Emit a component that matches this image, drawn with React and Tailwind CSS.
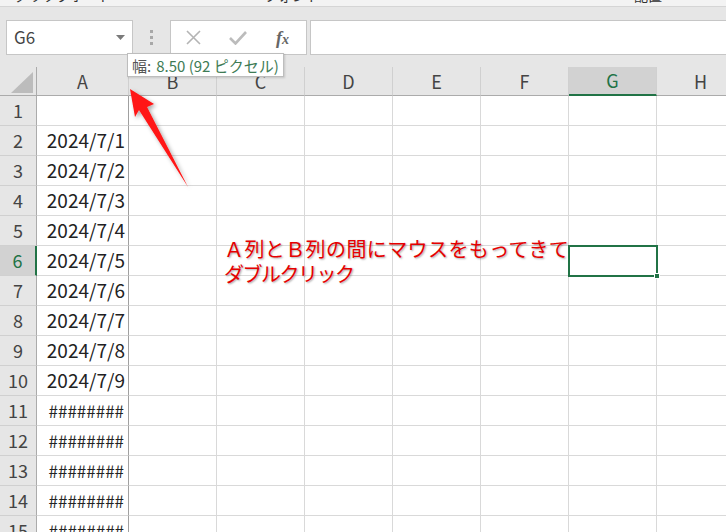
import React from "react";

const cols = ["A", "B", "C", "D", "E", "F", "G", "H"];
const aVals = [
  "",
  "2024/7/1",
  "2024/7/2",
  "2024/7/3",
  "2024/7/4",
  "2024/7/5",
  "2024/7/6",
  "2024/7/7",
  "2024/7/8",
  "2024/7/9",
  "########",
  "########",
  "########",
  "########",
  "########",
];

const font = { fontFamily: '"Noto Sans CJK JP", "Noto Sans", sans-serif' };

export default function App() {
  return (
    <div
      className="relative w-[726px] h-[532px] overflow-hidden bg-white text-[#222]"
      style={font}
    >
      {/* ribbon remnant */}
      <div className="h-[7px] bg-[#f3f3f3] border-b border-[#d5d5d5] overflow-hidden">
        <div className="flex -mt-[13px] text-[14px] leading-[16px] text-[#333]">
          <span className="ml-[14px] w-[240px]">クリップボード</span>
          <span className="ml-[10px] w-[360px]">フォント</span>
          <span className="ml-[10px]">配置</span>
        </div>
      </div>

      {/* formula bar area */}
      <div className="h-[60px] bg-[#e6e6e6] pt-[13px] flex items-start">
        <div className="ml-[6px] w-[127px] h-[35px] bg-white border border-[#c6c6c6] flex items-center justify-between pl-[7px] pr-[7px]">
          <span className="text-[17px] text-[#444] -mt-[2px]">G6</span>
          <svg width="9" height="5" viewBox="0 0 9 5">
            <path d="M0 0 L9 0 L4.5 5 Z" fill="#7a7a7a" />
          </svg>
        </div>
        <div className="w-[37px] h-[35px] flex flex-col items-center justify-center gap-[3px]">
          <span className="w-[3px] h-[3px] bg-[#a8a8a8]" />
          <span className="w-[3px] h-[3px] bg-[#a8a8a8]" />
          <span className="w-[3px] h-[3px] bg-[#a8a8a8]" />
        </div>
        <div className="w-[137px] h-[35px] bg-white border border-[#c6c6c6] flex items-center">
          <svg className="ml-[15px]" width="15" height="15" viewBox="0 0 15 15">
            <path d="M1 1 L14 14 M14 1 L1 14" stroke="#b4b4b4" strokeWidth="1.6" />
          </svg>
          <svg className="ml-[28px]" width="18" height="15" viewBox="0 0 18 15">
            <path d="M1 8 L6.5 13.5 L17 2" stroke="#bcbcbc" strokeWidth="2.6" fill="none" />
          </svg>
          <span
            className="ml-[29px] text-[18px] italic font-bold text-[#666] leading-none"
            style={{ fontFamily: '"Liberation Serif", serif' }}
          >
            f<span className="text-[14px]">x</span>
          </span>
        </div>
        <div className="ml-[3px] flex-1 h-[35px] bg-white border border-[#c6c6c6] border-r-0" />
      </div>

      {/* grid */}
      <div className="grid grid-cols-[37px_92px_88px_88px_88px_88px_88px_88px_88px]">
        {/* header row */}
        <div className="h-[29px] bg-[#e6e6e6] border-r border-b border-[#ababab] relative">
          <svg className="absolute left-[11px] top-[5px]" width="22" height="21" viewBox="0 0 22 21">
            <path d="M22 0 L22 21 L0 21 Z" fill="#bcbcbc" />
          </svg>
        </div>
        {cols.map((c) => {
          const sel = c === "G";
          return (
            <div
              key={c}
              className={
                sel
                  ? "h-[29px] bg-[#d2d2d2] border-r border-[#d0d0d0] border-b-2 border-b-[#217346] flex items-center justify-center text-[18px] text-[#217346]"
                  : "h-[29px] bg-[#e6e6e6] border-r border-[#d0d0d0] border-b border-b-[#ababab] flex items-center justify-center text-[18px] text-[#444]"
              }
            >
              {c}
            </div>
          );
        })}

        {aVals.map((v, i) => {
          const r = i + 1;
          const selRow = r === 6;
          const isHash = v.startsWith("#");
          return (
            <React.Fragment key={r}>
              <div
                className={
                  selRow
                    ? "h-[30px] bg-[#d2d2d2] border-b border-[#d0d0d0] border-r-2 border-r-[#217346] flex items-center justify-center text-[18px] text-[#217346]"
                    : "h-[30px] bg-[#e6e6e6] border-b border-[#d0d0d0] border-r border-r-[#ababab] flex items-center justify-center text-[18px] text-[#444]"
                }
              >
                {r}
              </div>
              <div
                className={
                  isHash
                    ? "h-[30px] border-b border-[#d9d9d9] border-r border-r-[#a0a0a0] flex items-center justify-end pr-[4px] text-[17px] text-[#222] overflow-hidden"
                    : "h-[30px] border-b border-[#d9d9d9] border-r border-r-[#a0a0a0] flex items-center justify-end pr-[3px] text-[19px] text-[#222] overflow-hidden"
                }
              >
                {v}
              </div>
              {cols.slice(1).map((c) => (
                <div key={c} className="h-[30px] border-b border-r border-[#d9d9d9]" />
              ))}
            </React.Fragment>
          );
        })}
      </div>

      {/* selected cell G6 */}
      <div className="absolute left-[568px] top-[245px] w-[90px] h-[32px] border-2 border-[#217346]" />
      <div className="absolute left-[654px] top-[273px] w-[6px] h-[6px] bg-[#217346] border border-white" />

      {/* tooltip */}
      <div className="absolute left-[127px] top-[53px] h-[24px] px-[4px] bg-white border border-[#bdbdbd] shadow-[1px_1px_2px_rgba(0,0,0,0.15)] flex items-center text-[15px] leading-none whitespace-nowrap">
        <span className="text-[#555]">幅:</span>
        <span className="ml-[5px] text-[#3e7b55]">8.50 (92 ピクセル)</span>
      </div>

      {/* red arrow */}
      <svg className="absolute left-0 top-0 pointer-events-none" width="726" height="532">
        <defs>
          <filter id="sh" x="-20%" y="-20%" width="140%" height="140%">
            <feDropShadow dx="2" dy="2" stdDeviation="2" floodColor="#000" floodOpacity="0.35" />
          </filter>
        </defs>
        <polygon
          points="130,89 154,104 147,107 188,187 139,110 135,117"
          fill="#ff1414"
          filter="url(#sh)"
        />
      </svg>

      {/* annotation */}
      <div
        className="absolute left-[224px] top-[236px] text-[20px] leading-[25px] text-[#e60000] whitespace-nowrap"
        style={{ textShadow: "1px 1px 2px rgba(0,0,0,0.35)" }}
      >
        <div className="tracking-[0.4px]">Ａ列とＢ列の間にマウスをもってきて</div>
        <div className="tracking-[-1.5px]">ダブルクリック</div>
      </div>
    </div>
  );
}
